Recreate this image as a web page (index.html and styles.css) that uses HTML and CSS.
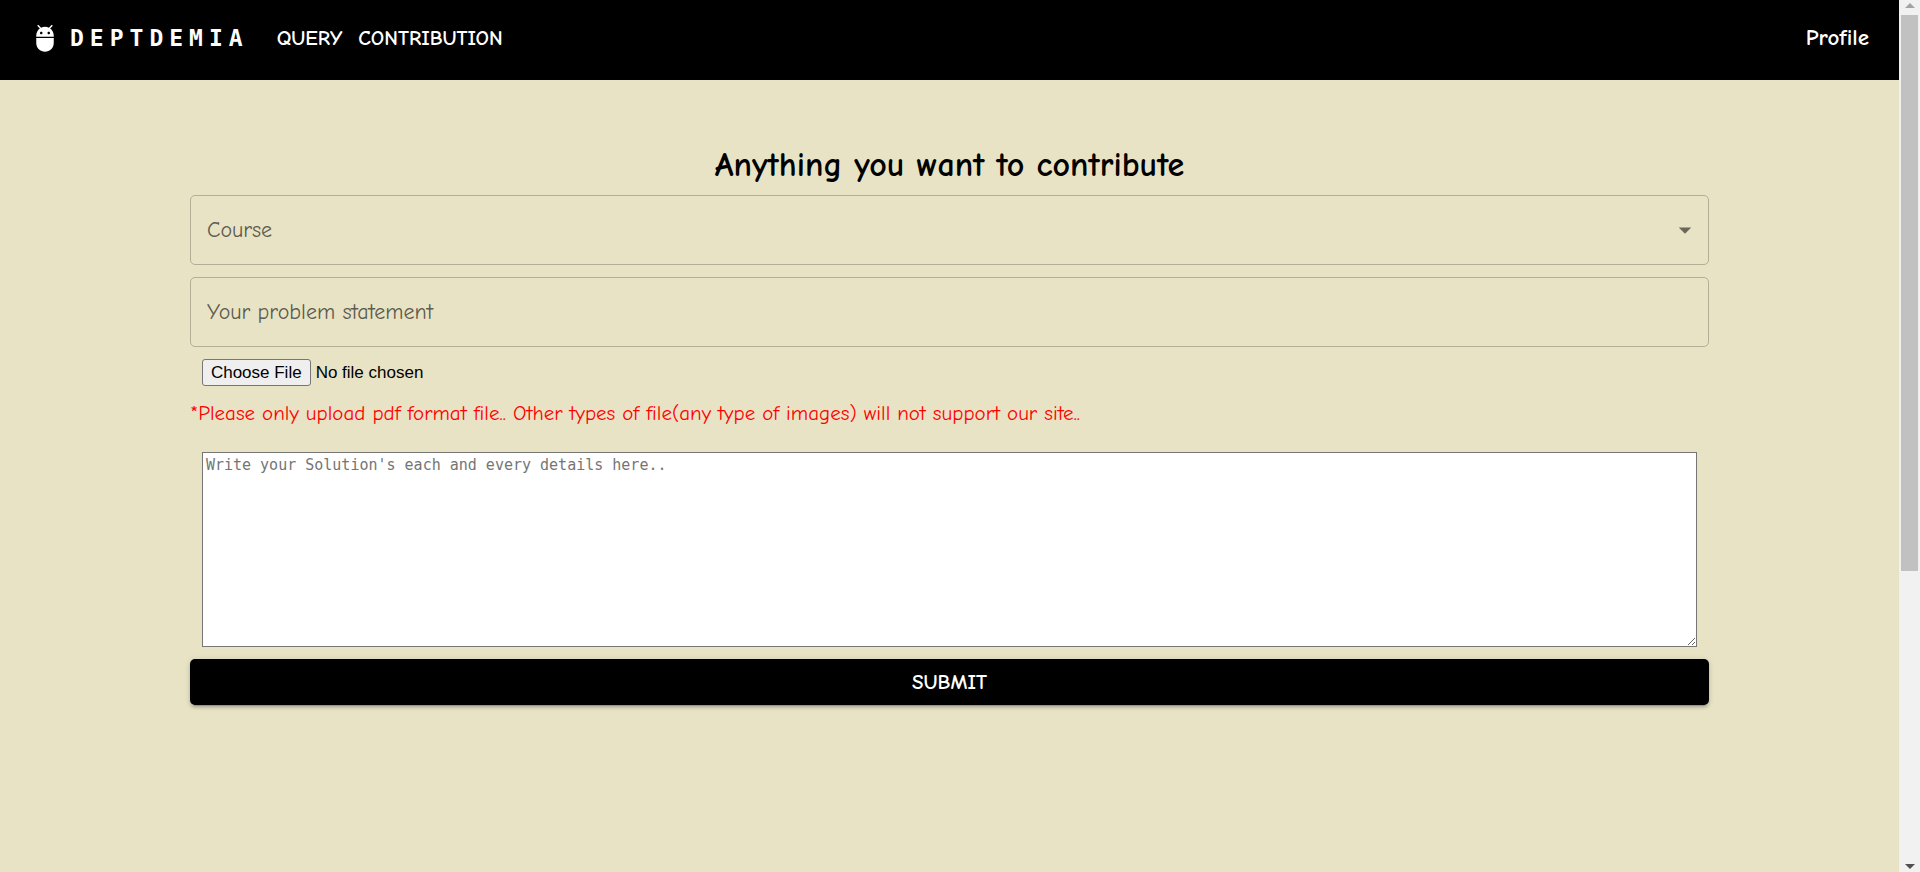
FILE: index.html
```
<!DOCTYPE html>
<html lang="en">
<head>
<meta charset="utf-8">
<title>Deptdemia</title>
<link rel="stylesheet" href="styles.css">
</head>
<body>
<div class="page">
  <header class="bar">
    <a class="brand" href="#">
      <svg class="brand-icon" viewBox="0 0 24 24" aria-hidden="true"><path d="M5 16c0 3.87 3.13 7 7 7s7-3.13 7-7v-4H5v4zM16.12 4.37l2.1-2.1-.82-.83-2.3 2.31C14.16 3.28 13.12 3 12 3s-2.16.28-3.09.75L6.6 1.44l-.82.83 2.1 2.1C6.14 5.64 5 7.68 5 10v1h14v-1c0-2.32-1.14-4.36-2.88-5.63zM9 9c-.55 0-1-.45-1-1s.45-1 1-1 1 .45 1 1-.45 1-1 1zm6 0c-.55 0-1-.45-1-1s.45-1 1-1 1 .45 1 1-.45 1-1 1z"/></svg>
      <span class="brand-name">DEPTDEMIA</span>
    </a>
    <nav class="links">
      <a href="#">QUERY</a>
      <a href="#">CONTRIBUTION</a>
    </nav>
    <a class="profile" href="#">Profile</a>
  </header>
  <main class="content">
    <h1 class="title">Anything you want to contribute</h1>
    <form class="form">
      <div class="select-wrap">
        <select class="field" aria-label="Course"><option>Course</option></select>
        <svg class="arrow" viewBox="0 0 24 24" aria-hidden="true"><path d="M7 10l5 5 5-5z"/></svg>
      </div>
      <input class="field" type="text" aria-label="Your problem statement" placeholder="Your problem statement">
      <input class="file" type="file" aria-label="Solution file">
      <p class="warning">*Please only upload pdf format file.. Other types of file(any type of images) will not support our site..</p>
      <textarea class="details" aria-label="Solution details" placeholder="Write your Solution's each and every details here.."></textarea>
      <button class="submit" type="button">SUBMIT</button>
    </form>
  </main>
</div>
<div class="scrollbar" aria-hidden="true">
  <svg class="step step-up" viewBox="0 0 10 5"><path d="M0 5L5 0L10 5z"/></svg>
  <div class="track"><div class="thumb"></div></div>
  <svg class="step step-down" viewBox="0 0 10 5"><path d="M0 0H10L5 5z"/></svg>
</div>
</body>
</html>
```
FILE: styles.css
```
* { box-sizing: border-box; }
body {
  margin: 0;
  height: 100vh;
  display: grid;
  grid-template-columns: 1fr 21px;
  background: #e8e3c5;
  color: #000;
  font-family: "Comic Sans MS", "Comic Neue", "Open Sans", sans-serif;
  font-size: 21px;
  line-height: 30px;
}
a { color: inherit; text-decoration: none; }
.page { min-width: 0; }
.bar {
  display: flex;
  align-items: center;
  height: 80px;
  padding: 0 30px 5px;
  background: #000;
  color: #fff;
}
.brand { display: flex; align-items: center; gap: 10px; }
.brand-icon { width: 30px; height: 30px; fill: #fff; }
.brand-name {
  font-family: "DejaVu Sans Mono", monospace;
  font-size: 23px;
  font-weight: 700;
  letter-spacing: 6px;
}
.links { display: flex; gap: 16px; margin-left: 28px; font-weight: 600; }
.profile { margin-left: auto; font-size: 23px; font-weight: 600; }
.content { width: 80%; margin: 0 auto; padding-top: 65px; }
.title { margin: 0 0 10px; font-size: 34px; line-height: 40px; font-weight: 700; text-align: center; }
.form { display: flex; flex-direction: column; gap: 12px; }
.select-wrap { display: grid; align-items: center; }
.select-wrap > * { grid-area: 1 / 1; }
.field {
  appearance: none;
  width: 100%;
  height: 70px;
  padding: 0 16px;
  border: 1px solid #b3ae97;
  border-radius: 5px;
  background: transparent;
  color: #5d5b4f;
  font: inherit;
  font-size: 22px;
}
.field::placeholder { color: #5d5b4f; opacity: 1; }
.arrow { justify-self: end; width: 30px; height: 30px; margin-right: 9px; fill: #69675a; pointer-events: none; }
.file { margin: 0 12px; font-family: "Liberation Sans", Arial, sans-serif; font-size: 17px; line-height: 20px; }
.file::file-selector-button {
  height: 27px;
  padding: 1px 8px;
  margin-right: 5px;
  border: 1px solid #767676;
  border-radius: 3px;
  background: #efefef;
  color: #000;
  font: inherit;
}
.warning { margin: 0 0 12px; color: #f00; }
.details {
  height: 195px;
  margin: 0 12px;
  padding: 3px;
  border: 1px solid #767676;
  background: #fff;
  font-family: "DejaVu Sans Mono", monospace;
  font-size: 15px;
  line-height: 19px;
}
.details::placeholder { color: #757575; }
.submit {
  height: 46px;
  border: 0;
  border-radius: 5px;
  background: #000;
  color: #fff;
  font: inherit;
  font-weight: 600;
  box-shadow: 0 4px 1px -3px rgba(0, 0, 0, .2), 0 3px 3px rgba(0, 0, 0, .14), 0 1px 6px rgba(0, 0, 0, .12);
}
.scrollbar { display: flex; flex-direction: column; align-items: center; padding: 3px 0; background: #f1f1f1; }
.step { width: 10px; height: 5px; }
.step-up { fill: #a3a3a3; }
.step-down { fill: #505050; }
.track { flex: 1; margin: 7px 0; }
.thumb { width: 17px; height: 66%; background: #c1c1c1; }
```
